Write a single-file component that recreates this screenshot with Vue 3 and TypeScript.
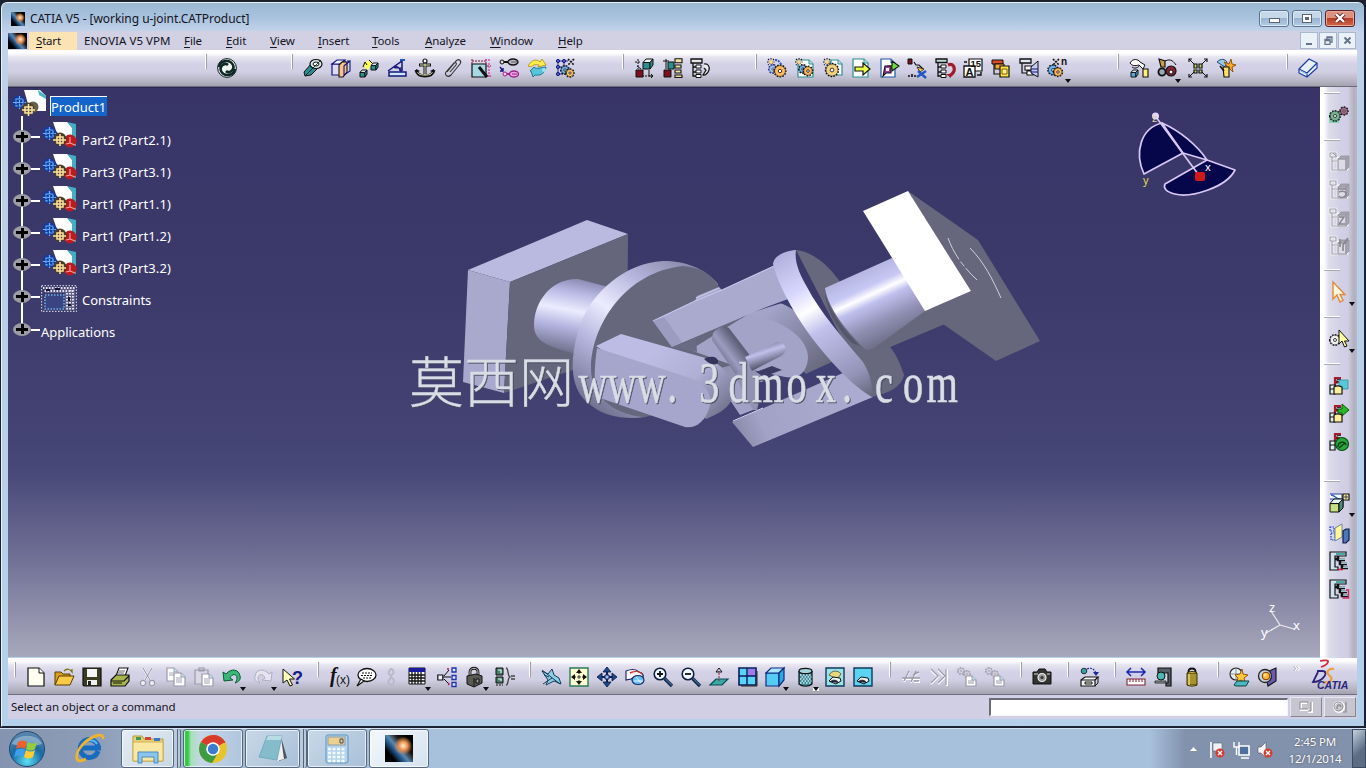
<script setup lang="ts">
// [path, fill, stroke, stroke width, dash]
type Shape = [string, string, string?, number?, string?]
interface Label { t: string, x: number, y: number, s: number, c: string, i?: boolean, b?: boolean }
interface Tool { icon: string, size?: number, more?: boolean }
interface Group { size: number, tools: Tool[] }

const K = '#111'
const NAVY = '#14147c'
const TEAL = '#2a8f90'
const GREY = '#9b9aab'

const circ = (x: number, y: number, r: number) => `M${x - r} ${y}a${r} ${r} 0 1 0 ${2 * r} 0a${r} ${r} 0 1 0 ${-2 * r} 0z`
const oval = (x: number, y: number, a: number, b: number) => `M${x - a} ${y}a${a} ${b} 0 1 0 ${2 * a} 0a${a} ${b} 0 1 0 ${-2 * a} 0z`
const box = (x: number, y: number, w: number, h: number) => `M${x} ${y}h${w}v${h}h${-w}z`
const gear = (x: number, y: number, r: number, fill: string, line = K): Shape[] => [
  [circ(x, y, r), fill, line, 2, '1.5 1.2'],
  [circ(x, y, r - 0.2), fill, line, 0.5],
  [circ(x, y, r * 0.3), '#fff', line, 0.8],
]
const cube = (x: number, y: number, s: number, fill: string, line = K): Shape[] => [
  [`M${x} ${y + s * 0.35}h${s * 0.7}v${s * 0.65}h${-s * 0.7}z`, fill, line, 1],
  [`M${x} ${y + s * 0.35}L${x + s * 0.3} ${y}h${s * 0.7}L${x + s * 0.7} ${y + s * 0.35}z`, '#e4f6f4', line, 1],
  [`M${x + s} ${y}v${s * 0.6}L${x + s * 0.7} ${y + s}v${-s * 0.65}z`, fill, line, 1],
]
const page = (x: number, y: number, w: number, h: number, line = TEAL): Shape[] => [
  [`M${x} ${y}h${w - 4}l4 4v${h - 4}h${-w}z`, '#fff', line, 1.2],
  [`M${x + w - 4} ${y}v4h4`, '#bfeaf0', line, 1],
]
const sparkle = (x: number, y: number): Shape[] => [
  [`M${x} ${y - 4}v8M${x - 4} ${y}h8M${x - 3} ${y - 3}l6 6M${x + 3} ${y - 3}l-6 6`, 'none', K, 1.1, '1.5 1'],
  [circ(x, y, 2), '#ffd98b'],
]
// disabled vault icons of the side toolbar
const ghost: Shape[] = [
  ['M1 1h6v4h-6zM3 5v13h5M3 9h5M9 6h9v11h-9z', 'none', '#fff', 2.6],
  ['M1 1h6v4h-6zM3 5v13h5M3 9h5', 'none', '#96959f', 1.1],
  [box(9, 7, 8, 11), '#dddce6', '#96959f', 1.2],
  ['M9 7l3-3h8l-3 3zM20 4v11l-3 3V7z', '#a5a4b0', '#96959f', 0.8],
]
const lugs: Shape[] = [
  ['M6 10V2h6M6 6h5', 'none', '#a71c2c', 2.2],
  ['M8 8V3.500h4', 'none', K, 0.8],
  ['M1 9h5v9h-5zM1 13h5', '#dff0ee', K, 1.2],
]
const specTree: Shape[] = [
  ['M1 1h16v4h-11v11h3v3h-8z', '#cfe0ee', K, 1.2],
  [box(7, 2, 9, 2), '#4aa8a8'],
  ['M9 5v4h7M11 9v4h7M13 13v4h6M6 8h3', 'none', K, 2.6],
  ['M10 8.500h6M12 12.500h6M14 16.500h5', 'none', '#8cc4cc', 1.1],
]

const icons: Record<string, Shape[]> = {
  update: [
    [circ(10, 10, 9.4), '#eef4ee', '#0a1c1c', 1],
    ['M2 9C3 2 13 1 16 7c2 5-4 9-7 6', 'none', '#0f2727', 2.6],
    ['M18 11C17 18 7 19 4 13c-2-5 4-9 7-6', 'none', '#0f2727', 2.6],
  ],
  coincidence: [
    ['M2 18L1 14L9 5l7 4l-8 8z', TEAL, K, 1],
    [oval(13, 6, 6, 4.5), '#d8eeee', K, 1.2],
    [oval(13, 6, 3, 2), '#fff', K, 1],
    ['M2 18L18 2', 'none', K, 0.8],
  ],
  contact: [
    [box(1, 6, 8, 11), '#dcdcf8', NAVY, 1.2],
    ['M1 6l5-4h8l-5 4zM9 17l5-4v-11', '#f2f2ff', NAVY, 1.1],
    ['M8 7l3-3h5v10l-4 5h-4z', '#f7c38b', K, 1.1],
    ['M13 8v9l6-4V3l-5 4zM16 3h3', 'none', NAVY, 1.1],
  ],
  offset: [...cube(1, 12, 7, TEAL), ...cube(12, 5, 7, TEAL), ['M5 9C6 2 10 2 13 5L9 12z', '#ffff55'], ['M4 9l2-5l2 3M13 5l-3-3', 'none', K, 1]],
  angle: [['M1 13L15 3v10', 'none', NAVY, 1.5], ['M2 14h17v4h-17z', '#cfe6ff', NAVY, 1.5], ['M7 10c3-3 6 0 6 3M8 10h6v4', 'none', NAVY, 1.2], ['M13 2h5', 'none', '#2255bb', 2]],
  anchor: [
    ['M10 5v13M4 7h12M1 12c1 5 5 6 9 6s8-1 9-6', 'none', K, 3],
    ['M10 5v12M5 7h10M2 13c1 4 5 4 8 4s7 0 8-4', 'none', '#e8ecb8', 1],
    [circ(10, 3, 2), '#fff', K, 1.2],
    ['M1 15V11l4 2zM19 15V11l-4 2z', K],
  ],
  clip: [['M4 14L13 3c3-3 6 0 4 3L8 17c-3 3-7 0-5-3L11 5c2-1 3 0 2 2L7 14', 'none', '#333', 1.1]],
  quick: [
    [box(1, 6, 14, 13), '#a8d8e4', K, 1.2],
    ['M1 1v5M15 1v5M1 3h14M16 8h4M16 18h4', 'none', '#7a1634', 1, '2 1'],
    ['M18 5v14M14 2h6', 'none', '#e04ab0', 1.4, '2 1'],
    ['M8 9l8 10', 'none', K, 3],
  ],
  flexible: [
    ['M1 4h8', 'none', K, 2], [oval(14, 4, 5, 3), '#bdbdc8', K, 1.3], [circ(3, 4, 2), '#ddd', K, 1], ['M12 4h6', 'none', '#555', 1],
    ['M7 16h6', 'none', '#a0208a', 2], [oval(15, 16, 4.5, 3), '#e8a4dc', '#a0208a', 1.3], [circ(6, 16, 2), '#f2c8ec', '#a0208a', 1], ['M13 16h5', 'none', '#a0208a', 1],
    ['M1 9l3 4M4 10v3h-3', 'none', NAVY, 1.4],
  ],
  change: [
    ['M1 8C5 1 10 1 13 4l2-3l4 6l-8 2l1-2C8 6 6 7 4 9z', '#ffec4a', '#b08a10', 0.8],
    ['M3 13l4-4c2 3 8 0 12 0c-1 6-5 9-11 8l-2 2l-2-6z', '#58c4dc', '#16708a', 0.9],
    [circ(17, 12, 2), '#9ee2ee'],
  ],
  pattern: [
    ['M3 3h10M3 9h8M3 16h5M3 3v13M9 3v13', 'none', NAVY, 0.9],
    [circ(3, 3, 1.6) + circ(9, 3, 1.6) + circ(3, 9, 1.6) + circ(3, 16, 1.6), '#4a66d8', NAVY, 1],
    ['M13 1l6 6M19 1l-6 6', 'none', K, 1.6, '2 1'],
    ...gear(10, 12, 4, '#6cb4f0'), ...gear(15, 15, 3.8, '#ffc86a'),
  ],
  posMove: [['M1 4h6M4 1v10M8 18h10', 'none', K, 1, '2 1'], ...cube(9, 1, 10, TEAL), [box(2, 12, 7, 7), '#7a1020', K, 1], ['M15 12v6h4M17 16l2 2l-2 2M3 8l4 3', 'none', K, 1]],
  posTree: [['M1 3h6M4 1v10', 'none', K, 1], [box(6, 4, 6, 7), TEAL, K, 1], [box(2, 12, 7, 7), '#7a1020', K, 1], [box(13, 0.8, 7, 4) + box(13, 7, 6, 3) + box(13, 12, 6, 3) + box(13, 17, 7, 2.5), '#f3e2a4', K, 1.1]],
  treeSort: [[box(1, 1, 11, 4), '#e6e6ea', K, 1.3], ['M3 5v13h6M3 9h6M3 14h6', 'none', K, 1.3], [box(6, 7, 5, 3) + box(6, 12, 5, 3) + box(6, 16.5, 5, 3), '#fff', K, 1], ['M14 6c4-1 6 3 5 6s-4 6-6 5l3-5l-2-2', '#e8e8ee', K, 1.2]],
  comp: [...sparkle(4, 4), ['M8 2c5 0 5 4 7 5', 'none', '#3454c0', 2, '2 1'], ...gear(6, 11, 4, '#a8c8f0', '#2c3a90'), ...gear(13, 13, 5.6, '#ffb85c')],
  product: [...page(3, 2, 15, 17), ...sparkle(4, 4), ...gear(8, 11, 4, '#6cb4f0'), ...gear(13, 13, 4.4, '#ffb85c')],
  part: [...page(8, 2, 11, 15), ...sparkle(4, 4), ...gear(9, 12, 6.2, '#f0d080')],
  existing: [...page(2, 1, 15, 18), ['M4 9h8v-4l7 6l-7 6v-4h-8z', '#eaff4a', K, 1.2]],
  existingPos: [...page(2, 1, 14, 18, '#1a5aa0'), ['M8 8h5V3l7 5l-7 5v-3h-3v4', '#6adc3a', K, 1.1], ['M4 18l2-10h6v7h-5z', '#a03aa0', K, 1.1], [box(7, 10, 3, 3), '#fff']],
  replace: [[box(1, 1, 4, 5), '#7a1020', K, 1], ['M7 4l2 3h3l4 4', 'none', K, 1.2], ['M10 9l7 2l-4 3z', '#ffc83a', K, 0.8], ['M10 19l9-6M11 13l8 7', 'none', '#2456c4', 2.4], ['M1 18h2M5 16v3M7 18h2', 'none', K, 1.6]],
  reorder: [[box(1, 1, 11, 3.5), '#bfdcd8', K, 1.3], ['M3 5v13h6M3 9h6M3 14h6', 'none', K, 1.3], [box(6, 7, 5, 3) + box(6, 12, 5, 3) + box(6, 16.5, 5, 3), '#fff', K, 1], ['M13 7c5-2 7 2 6 6c-1 3-3 4-5 5', 'none', '#a31a2a', 3.2], ['M11 16l5 0l0 4z', '#a31a2a']],
  numbering: [[box(6, 1, 13, 12), '#fff', K, 1.2], [box(1, 8, 11, 11), '#fff', K, 1.3], ['M14 17h4v-3M1 4h3', 'none', K, 1.4]],
  selective: [['M1 2h11v4h-11z', '#d84a28', K, 1], ['M4 6h9v5h-9z', '#f6a83a', K, 1], ['M9 8h9v11h-9z', '#ffe640', K, 1.2], ['M11 11h5v5h-5z', '#fff68a', '#805a00', 1], ['M3 6v10h6', 'none', K, 1.2]],
  reps: [[box(1, 1, 11, 4), '#dfe8f4', K, 1.3], ['M3 5v10h6', 'none', K, 1.2], [box(6, 8, 7, 4) + box(8, 13, 6, 4), '#fff', K, 1.1], ['M19 3v16l-7-4V9z', '#c4c8f4', K, 1], ['M12 11h7M12 14h7', 'none', NAVY, 1]],
  multi: [['M6 1l6 6M12 1l-6 6', 'none', K, 1.6, '2 1'], ...gear(6, 12, 4.8, '#6cb4f0'), ...gear(11, 14, 4.2, '#ffb85c')],
  manip: [['M1 5c3-5 8-4 10-1l5 3l-2 4l-4-4c-4 1-7 1-9-2z', '#fff', K, 1], ['M3 9c2 2 6 1 7-1', 'none', K, 1], ...cube(2, 12, 7, '#58a8e0'), [box(14, 11, 5, 8), '#ffef7a', K, 1.1]],
  snap: [['M2 1l6 2v6h-4z', '#c8a04a', K, 1.2], ['M8 3c6-3 9 1 11 4', 'none', K, 1], [circ(5, 14, 3.6), '#9aa8b4', K, 1.8], [circ(14, 13, 5), '#8a2438', K, 1.2], [circ(14, 14, 2), '#fff', K, 1]],
  explode: [['M1 1l5 5M19 1l-5 5M1 19l5-5M19 19l-5-5', 'none', K, 1], ['M1 4V1h3M16 1h3v3M1 16v3h3M19 16v3h-3', 'none', K, 1.2], [box(6, 6, 3, 4) + box(11, 6, 3, 4) + box(6, 12, 3, 3) + box(11, 12, 3, 3), '#c4d46a', K, 1.2]],
  clash: [['M1 4c4-4 8-3 10 0l-2 5z', '#9acbe6', '#224a80', 1], ['M15 1l1 5l4 1l-4 2l1 5l-4-4l-4 2l2-4l-3-4l5 2z', '#ffa82e', '#8a4a00', 0.9], ['M7 9h6v10h-5z', '#ffe066', K, 1.1], ['M4 8l4 5', 'none', K, 1.5]],
  book: [['M1 11L11 1l8 4v5L9 19l-8-4z', '#e6f0ff', '#1a3aa0', 1.2], ['M1 11l8 4L19 5M9 15v4', 'none', '#1a3aa0', 1.2], ['M3 13l6 3l9-9', 'none', '#8aa8e0', 1]],

  gears: [['M0 8h12l-2 10h-10z', '#8fd0b8'], ...gear(6, 11, 5, '#7ab090', '#0e1c1c'), ...gear(15, 6, 3.8, '#a4708c', '#201020')],
  pdm1: [...ghost, ['M4 1l4 4', 'none', GREY, 1]],
  pdm2: [...ghost, ['M9 9h8M10 12c4-2 8 0 7 3c-2 3-6 3-7 1', 'none', '#85848f', 1.5]],
  pdm3: [...ghost, ['M10 9h5l-5 7h6', 'none', '#85848f', 1.4]],
  pdm4: [...ghost, ['M11 3v8M19 2l-5 7v6', 'none', '#85848f', 1.6]],
  cursor: [['M4 0v17l4-4l3 7l3-1.500l-3-6h5z', '#fff6dc', '#e08a3c', 1.4]],
  cursorGear: [...gear(6, 11, 5, '#f0f0f0'), ['M10 1v14l3-3l2.500 6l2.500-1l-2.500-5h4.500z', '#ffffa0', K, 1]],
  save1: [...lugs, [box(10, 4, 9, 9), '#5ac8dc', TEAL, 0.8], ['M5 11c3-2 6-1 8 0v7h-8z', '#ffef9a', K, 1.2]],
  save2: [...lugs, ['M9 5h4V0l7 6l-7 6v-3h-4z', '#28b828', '#0a5a0a', 1], ['M5 11c3-2 6-1 8 0v7h-8z', '#ffef9a', K, 1.2]],
  save3: [...lugs, [circ(13, 12, 6.5), '#28a83c', '#0a4a14', 1.2], ['M9 15c0-6 7-6 8-2M10 16l6-5', 'none', '#0a3a14', 1.3]],
  annot: [['M1 1h12v5h-12', '#fff', '#1a3aa0', 1], ['M2 2c4 0 4 4 9 4', 'none', '#2a5ad0', 1.4], ...cube(1, 6, 13, '#c8e080'), ['M14 6v9l-4 4V10z', '#4a8a7a', K, 1], [box(14, 1, 6, 6), '#fff6b0', K, 1.2], [box(16, 3, 2, 2), '#fff', K, 0.8]],
  views: [['M1 4h4v4h-4zM2 10h4v7h-4z', 'none', '#1a3ad0', 1.2, '1.5 1'], ['M6 5l7-4v13l-7 4z', '#fff59a', '#6a8a9a', 1], ['M14 8l3-2h3v11l-3 3h-3z', '#4a78b8', '#101c50', 1.2]],
  spec1: [...specTree, ['M9 18.500h5', 'none', '#d0203c', 1.6]],
  spec2: [...specTree, ['M17 11h2.500v8h-6', 'none', '#d82860', 1.5]],

  new: [['M2 1h11l5 5v13h-16z', '#fffff2', K, 1.2], ['M13 1v5h5', '#fff', K, 1]],
  open: [['M1 18V5h6l2 2h7v3', '#d8a018', '#5a3c00', 1], ['M1 18l4-9h15l-4 9z', '#f8ca48', '#5a3c00', 1], ['M10 4c3-3 6-2 8 1v-3', 'none', '#7a6a10', 1.2]],
  save: [['M1 1h18v18h-17l-1-1z', '#3c3c22', K, 1.2], [box(5, 2, 10, 8), '#f6f6f6'], [box(5, 13, 10, 5), '#f0f0f0'], [box(6, 14, 3, 4), '#222']],
  print: [['M6 9l3-8h9l-3 8z', '#fff', K, 1.1], ['M1 13l5-5h13v6l-4 5h-14z', '#a8b44c', K, 1.2], ['M1 14h13l5-5M3 16h9', 'none', K, 1.1], ['M9 4h6M8 6h6', 'none', '#555', 0.9]],
  cut: [['M5 1l7 12M14 1L7 13', 'none', '#fff', 2], ['M5 1l7 12M14 1L7 13', 'none', GREY, 1.1], [circ(5, 16, 2.6) + circ(14, 16, 2.6), '#eee', GREY, 1.2]],
  copy: [...page(1, 1, 11, 13, GREY), ...page(8, 6, 11, 13, GREY), ['M10 11h6M10 13h6M10 15h6M3 6h5M3 8h5', 'none', GREY, 0.9]],
  paste: [['M1 3h13v14h-13zM5 1h5v3h-5z', '#d9d8e4', GREY, 1.2], ...page(8, 7, 11, 12, GREY), ['M10 12h6M10 14h6M10 16h6', 'none', GREY, 0.9]],
  undo: [['M1 5l1 9l9-1l-3-2c2-5 7-4 7 0c0 2-1 4-2 5c4-1 6-4 5-7c-1-7-9-8-14-2z', '#38b878', '#0a5a34', 1]],
  redo: [['M19 5l-1 9l-9-1l3-2c-2-5-7-4-7 0c0 2 1 4 2 5c-4-1-6-4-5-7c1-7 9-8 14-2z', '#e6e5ef', '#b0afbf', 1]],
  help: [['M1 2v14l4-3l3 6l2.500-1l-3-6h5z', '#ffffb8', K, 1]],
  fx: [],
  comment: [[oval(11, 8, 9, 6.500), '#fff', K, 1.3], ['M5 12l-4 7l7-5z', '#fff', K, 1.2], ['M6 6h10M5 8.500h12M7 11h8', 'none', K, 1, '2 1']],
  link: [['M8 2c4-1 5 6 1 6c-3 0-3-5 0-5M9 7v4M8 11c5-1 5 7 1 7c-4 0-3-6 0-6', 'none', '#b9b8c6', 1.8]],
  table: [[box(2, 1, 16, 16), '#fff', K, 1], [box(2, 1, 16, 4), '#1a1aa0'], ['M2 8h16M2 11h16M2 14h16M5 5v12M8 5v12M11 5v12M14 5v12', 'none', K, 1.3]],
  relations: [[box(0.800, 8, 5, 5), '#eef', K, 1.2], ['M6 10h8M7 9l5-6M7 12l5 5', 'none', K, 1], ['M12 2h-3M12 18l-1-3', 'none', '#b01838', 1.6, '2 1'], [box(15, 1, 4, 4) + box(15, 8.500, 4, 4) + box(15, 15.500, 4, 4), '#dfe6ff', '#2030b0', 1.3]],
  lock: [['M5 9V5c0-5 8-5 8 0v3', 'none', K, 2.8], ['M5 9V5c0-5 8-5 8 0v3', 'none', '#ccc', 1], ['M2 9l9-2l6 2v7l-8 4l-7-3z', '#5a5a54', K, 1], ['M9 11v8M11 12h3v4h-3z', '#9a9a90', K, 1]],
  equiv: [[box(1, 1, 7, 7) + box(1, 10, 7, 6), '#4a7a6a', K, 1], ['M3 3h3v3M3 12h3v2', 'none', '#cfe', 1.2], ['M1 18h7', 'none', K, 1, '2 1'], ['M11 1c3 0 1 8 4 9c-3 1-1 8-4 8', 'none', '#444', 1.3], ['M16 9h4M16 12h4', 'none', '#444', 1.3]],
  fly: [['M1 4l6 3l4-5l2 6l5 3l2 6l-7-3l-8 4l2-5z', '#8ad0e4', '#1a3a5a', 1], ['M1 3l18 14M2 17l9-6M3 8l5 2', 'none', '#1a3a5a', 1]],
  fit: [[box(1, 1, 18, 18), '#fffbd0', '#2a7a5a', 1.4], ['M10 3v14M3 10h14', 'none', K, 1, '4 6'], ['M10 2l-3 4h6zM10 18l-3-4h6zM2 10l4-3v6zM18 10l-4-3v6z', K], ['M9 9h2v2h-2z', '#fff', K, 0.8]],
  pan: [['M10 2v16M2 10h16', 'none', '#10205c', 2], ['M10 0l-4 5h8zM10 20l-4-5h8zM0 10l5-4v8zM20 10l-5-4v8z', '#1a4a8a', '#08143c', 0.8], [box(8, 8, 4, 4), '#9cc4e8', '#10205c', 1]],
  rotate: [['M1 4v9l5-1c3-3 8-1 11 0c3-3 0-7-3-7c-3-3-8-3-13-1z', '#fff', '#1a1a5a', 1.1], ['M5 6c4-2 9-2 12 1', 'none', '#d0342c', 1.4], [oval(13, 13, 6, 4.500), '#6ac0f0', '#1a2a6a', 1.2], ['M11 10l5 6M9 14h9', 'none', '#e8f8ff', 1]],
  zoomIn: [[circ(7, 7, 5.800), '#eef8ff', '#10203c', 1.6], ['M4 7h6M7 4v6', 'none', K, 1.8], ['M11.500 11.500l7.500 7.500', 'none', '#10284c', 3.4], ['M12 11.500l7 7', 'none', '#7ac', 0.8]],
  zoomOut: [[circ(7, 7, 5.800), '#eef8ff', '#10203c', 1.6], ['M4 7h6', 'none', K, 1.8], ['M11.500 11.500l7.500 7.500', 'none', '#10284c', 3.4], ['M12 11.500l7 7', 'none', '#7ac', 0.8]],
  normal: [['M1 18l6-6h12l-6 6z', '#3aa8a0', '#0a4a5a', 1.2], ['M10 14V4', 'none', '#a02848', 1.1, '2 1'], ['M10 1l-3 4h6z', 'none', K, 1]],
  quad: [[box(2, 1, 17, 17), '#5ad4f4', '#0a1a5c', 1.6], [box(11, 2, 7, 7), '#a07ae8'], ['M10 1v17M2 9h17', 'none', '#0a1a5c', 1.4], ['M4 19h16V4', 'none', '#222', 1]],
  iso: [['M1 6h13v13h-13z', '#54ccf4', '#102a80', 1.2], ['M1 6l5-5h13l-5 5z', '#a8e8ff', '#102a80', 1.2], ['M19 1v12l-5 6V6z', '#2ea8e0', '#102a80', 1.2]],
  shaded: [['M4 4v13c3 3 10 3 13 0V4', '#3c8898', K, 1.2], ['M5 8h11M5 12h11M5 16h11', 'none', '#cfeef0', 1.4, '1.5 1.5'], ['M6.500 10h10M6.500 14h10', 'none', '#cfeef0', 1.4, '1.5 1.5'], [oval(10.5, 4, 6.5, 2.600), '#a4d4dc', K, 1.2]],
  hide: [[box(1, 1, 18, 18), '#9ae4e8', '#10385c', 1.4], ['M4 8c3-5 9-5 12-1l-4 5z', '#e8d87a', '#555', 0.9], ['M4 14l4-4l7 1l1 3l-5 3z', '#e8f4f0', K, 1], ['M5 15c3-3 7-2 9 1', '#224', K, 0.8]],
  swap: [[box(1, 1, 18, 18), '#5ad4f0', '#10385c', 1.4], ['M4 14l4-4l7 1l1 3l-5 3z', '#e8f4f0', K, 1], ['M5 15c3-3 7-2 9 1', '#224', K, 0.8]],
  mute1: [['M1 12h18M3 15l5-10M10 16l5-11M12 9l6-3M13 15h6', 'none', '#fff', 1.8], ['M1 11h18M3 14l5-10M10 15l5-11M12 8l6-3M13 14h5', 'none', GREY, 1.4]],
  mute2: [['M2 3l7 7l-7 7M9 3l7 7l-7 7M18 2v17', 'none', '#fff', 2], ['M2 2l7 7l-7 7M9 2l7 7l-7 7M17 2v16', 'none', GREY, 1.2]],
  mute3: [...gear(4, 4, 3, '#d8d7e3', GREY), ...gear(10, 7, 3, '#d8d7e3', GREY), ...page(9, 9, 10, 10, GREY), ['M11 14h6M11 16h6', 'none', GREY, 1]],
  camera: [['M1 5h4l2-3h6l2 3h4v12h-18z', '#333', K, 1], [circ(10, 10.500, 4), '#9a9a9a', '#eee', 1.2], [circ(10, 10.500, 1.600), '#333'], ['M2 7h4M15 7h3', 'none', '#ddd', 1.2]],
  drop: [[circ(5, 4, 2.800), '#38a0a8', K, 0.8], ['M8 2c4-2 8 0 9 5', 'none', '#1a2a90', 1.2, '2 1'], ['M14 5h6l-3 4z', '#1a2a90'], ['M2 13l4-3h13l-3 3v6h-14z', '#f4f4f4', K, 1.2], ['M2 13h14l3-3v6l-3 3M6 15h7v2h-7z', 'none', K, 1]],
  measure: [['M1 5h18M5 1l-4 4l4 4M15 1l4 4l-4 4', 'none', '#1a2ab0', 1.6], [box(1, 12, 18, 6), '#fff', '#7a2438', 1.1], ['M4 12v3M7 12v3M10 12v3M13 12v3M16 12v3', 'none', '#7a2438', 1]],
  caliper: [['M4 1h13v18h-5v-3h2V6h-10z', '#556068', K, 1.2], [circ(7, 9, 4), '#4ab8b0', K, 1], ['M1 14h11v2h-11z', '#9aa', K, 0.8]],
  weight: [['M7 6c-3-6 9-6 6 0', 'none', K, 2], [box(5, 6, 10, 12), '#a8922c', '#3a3000', 1], ['M5 6c3-2 7-2 10 0M5 18c3 1.500 7 1.500 10 0', '#c8b44c', '#3a3000', 1], ['M7 7v11', 'none', '#e0d078', 1.6]],
  render: [[circ(7, 7, 6), '#e4f0f4', '#222', 1.1], ['M1 7h12M7 1v12', 'none', '#667', 0.7], ['M13 2l1 5l5 1l-4 3l1 5l-4-3l-4 2l1-4l-3-3l5-1z', '#ffc838', '#8a4a00', 0.9], ['M5 18l3-4h12l-3 5h-10z', '#4ab8c0', '#104040', 1]],
  material: [['M8 6L19 1v13l-8 5z', '#6a5ab0', K, 1.1], [circ(8, 9, 6.500), '#c8d4dc', '#222', 1.3], [circ(9, 9, 3.800), '#ffb83a', '#7a3a00', 1], [circ(8, 8, 1.500), '#ffe89a']],
}

const labels: Record<string, Label[]> = {
  numbering: [{ t: 'A', x: 2.5, y: 18, s: 11, c: K, b: true }, { t: '15', x: 7.5, y: 8.5, s: 9.5, c: K, b: true }],
  multi: [{ t: 'n', x: 14, y: 7, s: 10, c: K, b: true }],
  help: [{ t: '?', x: 10, y: 17, s: 18, c: '#14207c', b: true }],
  fx: [{ t: 'f', x: 1, y: 15, s: 20, c: K, i: true }, { t: '(x)', x: 7, y: 17, s: 12, c: K }],
}

const t = (names: string): Tool[] => names.split(' ').map((n) => {
  const [icon, size] = n.replace('+', '').split(':')
  return { icon, size: size ? Number(size) : undefined, more: n.includes('+') }
})

const topGroups: Group[] = [
  { size: 86, tools: t('update') },
  { size: 331, tools: t('coincidence contact offset angle anchor clip quick flexible change pattern') },
  { size: 133, tools: t('posMove posTree treeSort') },
  { size: 362, tools: t('comp product part existing existingPos replace reorder numbering selective reps multi+') },
  { size: 169, tools: t('manip snap+:31 explode clash') },
  { size: 60, tools: t('book') },
]
const bottomGroups: Group[] = [
  { size: 303, tools: t('new open save print cut copy paste undo+:31 redo+:29 help') },
  { size: 212, tools: t('fx:27 comment:26 link:25 table+:30 relations lock+:30 equiv') },
  { size: 360, tools: t('fly fit pan rotate zoomIn zoomOut normal quad iso+:30 shaded+:30 hide swap') },
  { size: 131, tools: t('mute1 mute2 mute3 mute3') },
  { size: 47, tools: t('camera') },
  { size: 47, tools: t('drop') },
  { size: 103, tools: t('measure caliper weight') },
  { size: 74, tools: t('render material') },
]
const sideGroups: Group[] = [
  { size: 47, tools: t('gears') },
  { size: 130, tools: t('pdm1 pdm2 pdm3 pdm4') },
  { size: 47, tools: t('cursor+') },
  { size: 47, tools: t('cursorGear+') },
  { size: 117, tools: t('save1 save2 save3') },
  { size: 140, tools: t('annot+:30 views spec1 spec2') },
]

const menus = ['File', 'Edit', 'View', 'Insert', 'Tools', 'Analyze', 'Window', 'Help']
const menuWidths = [42, 44, 48, 54, 53, 65, 68, 50]
const parts = ['Part2 (Part2.1)', 'Part3 (Part3.1)', 'Part1 (Part1.1)', 'Part1 (Part1.2)', 'Part3 (Part3.2)']

// full stops sit at the left of their cell
const watermark = 'www.3dmox.com'
const glyphX = [...watermark].map((c, i) => ((593 + i * 29.1 - (c === '.' ? 8 : 0)) / 0.72).toFixed(1)).join(' ')
</script>

<template>
  <div class="screen">
    <div class="window">
      <header class="titlebar">
        <span class="app-logo small"></span>
        <span class="title">CATIA V5 - [working u-joint.CATProduct]</span>
        <div class="win-buttons">
          <span class="win-btn"><i class="min"></i></span>
          <span class="win-btn"><i class="max"></i></span>
          <span class="win-btn close">
            <svg width="12" height="10" viewBox="0 0 12 10"><path d="M2 1l8 8M10 1l-8 8" stroke="#5a2020" stroke-width="4" /><path d="M2 1l8 8M10 1l-8 8" stroke="#fff" stroke-width="2.4" /></svg>
          </span>
        </div>
      </header>

      <nav class="menubar">
        <span class="app-logo"></span>
        <span class="start"><u>S</u>tart</span>
        <span class="enovia">ENOVIA V5 VPM</span>
        <span v-for="(m, i) in menus" :key="m" class="menu" :style="{ width: menuWidths[i] + 'px' }"><u>{{ m[0] }}</u>{{ m.slice(1) }}</span>
        <div class="doc-buttons">
          <span><i class="doc-min"></i></span>
          <span><svg width="9" height="9" viewBox="0 0 9 9"><path d="M3 3V1h5v5H6M1 3.500h5v5H1zM1 4.500h5M3 1.500h5" fill="none" stroke="#667487" stroke-width="1.300" /></svg></span>
          <span><svg width="9" height="9" viewBox="0 0 9 9"><path d="M1.500 1.500l6 6M7.500 1.500l-6 6" stroke="#667487" stroke-width="2" /></svg></span>
        </div>
      </nav>

      <div class="toolbar top">
        <div v-for="(g, gi) in topGroups" :key="gi" class="group" :style="{ width: g.size + 'px' }">
          <span v-for="(tool, ti) in g.tools" :key="ti" class="tool" :style="{ width: (tool.size ?? 28) + 'px' }">
            <svg viewBox="0 0 20 20" width="20" height="20">
              <path v-for="(s, si) in icons[tool.icon]" :key="si" :d="s[0]" :fill="s[1]" :stroke="s[2]" :stroke-width="s[3]" :stroke-dasharray="s[4]" />
              <text v-for="l in labels[tool.icon]" :key="l.t" :x="l.x" :y="l.y" :font-size="l.s" :fill="l.c" :class="{ slant: l.i, heavy: l.b }">{{ l.t }}</text>
            </svg>
            <i v-if="tool.more" class="more"></i>
          </span>
        </div>
      </div>

      <div class="middle">
        <main class="viewport">
          <svg class="scene" width="1312" height="570" viewBox="8 87 1312 570">
            <defs>
              <linearGradient id="shaftL" x1="0.550" y1="0" x2="0.350" y2="1">
                <stop offset="0" stop-color="#8c8cb4" /><stop offset="0.180" stop-color="#b8b8e4" /><stop offset="0.420" stop-color="#ececff" />
                <stop offset="0.650" stop-color="#b4b4e0" /><stop offset="1" stop-color="#6c6c88" />
              </linearGradient>
              <linearGradient id="rimL" gradientUnits="userSpaceOnUse" x1="700" y1="265" x2="600" y2="415">
                <stop offset="0" stop-color="#8484a4" /><stop offset="0.250" stop-color="#b4b4dc" /><stop offset="0.480" stop-color="#ececff" />
                <stop offset="0.700" stop-color="#b2b2dc" /><stop offset="1" stop-color="#6e6e8c" />
              </linearGradient>
              <linearGradient id="rimR" gradientUnits="userSpaceOnUse" x1="785" y1="252" x2="868" y2="395">
                <stop offset="0" stop-color="#b0b0dc" /><stop offset="0.250" stop-color="#d8d8ff" /><stop offset="0.380" stop-color="#fff" />
                <stop offset="0.520" stop-color="#c0c0ec" /><stop offset="0.850" stop-color="#9494b8" /><stop offset="1" stop-color="#6a6a82" />
              </linearGradient>
              <linearGradient id="shaftR" gradientUnits="userSpaceOnUse" x1="850" y1="272" x2="885" y2="348">
                <stop offset="0" stop-color="#b0b0dc" /><stop offset="0.250" stop-color="#c8c8f4" /><stop offset="0.350" stop-color="#fff" />
                <stop offset="0.450" stop-color="#c0c0ee" /><stop offset="0.700" stop-color="#9090b4" /><stop offset="1" stop-color="#67677f" />
              </linearGradient>
              <linearGradient id="lugEnd" gradientUnits="userSpaceOnUse" x1="660" y1="345" x2="728" y2="412">
                <stop offset="0" stop-color="#bcbce4" /><stop offset="0.500" stop-color="#b0b0d6" /><stop offset="1" stop-color="#70708c" />
              </linearGradient>
              <linearGradient id="pinA" gradientUnits="userSpaceOnUse" x1="715" y1="357" x2="736" y2="341">
                <stop offset="0" stop-color="#62627a" /><stop offset="0.500" stop-color="#9c9cc0" /><stop offset="1" stop-color="#60607a" />
              </linearGradient>
              <linearGradient id="pinB" gradientUnits="userSpaceOnUse" x1="764" y1="345" x2="770" y2="364">
                <stop offset="0" stop-color="#8888ac" /><stop offset="0.350" stop-color="#c0c0ea" /><stop offset="1" stop-color="#5a5a72" />
              </linearGradient>
              <linearGradient id="backLug" gradientUnits="userSpaceOnUse" x1="775" y1="305" x2="825" y2="370">
                <stop offset="0" stop-color="#a4a4ca" /><stop offset="0.450" stop-color="#8888a8" /><stop offset="1" stop-color="#656579" />
              </linearGradient>
              <linearGradient id="lower" gradientUnits="userSpaceOnUse" x1="740" y1="440" x2="860" y2="385">
                <stop offset="0" stop-color="#8a8aaa" /><stop offset="0.200" stop-color="#a2a2c6" /><stop offset="1" stop-color="#acacd2" />
              </linearGradient>
            </defs>

            <!-- left yoke: block, shaft, flange -->
            <path d="M468 270L587 220L628 234L510 282z" fill="#babae0" />
            <path d="M468 270L510 282L504 393L463 382z" fill="#a9a9cd" />
            <path d="M510 282L628 234L627 352L504 393z" fill="#65657c" />
            <path d="M578 279C553 278 534 300 534 325C534 340 545 346 572 353L595 345L612 288z" fill="url(#shaftL)" />
            <path d="M718 284C705 268 685 261 663 261C625 263 592 292 580 325C568 362 570 392 592 406C604 416 625 420 645 417L720 380z" fill="url(#rimL)" />
            <path d="M683 266C700 267 712 274 719 287L750 330L715 400L645 417C620 416 590 400 591 367C592 325 625 272 683 266z" fill="#66667c" />

            <!-- right yoke arms behind the cross -->
            <path d="M750 313L782 303L797 312L832 362L806 374L785 350z" fill="url(#backLug)" />
            <path d="M690 350L750 313C785 322 808 338 808 358C807 374 797 379 785 377L735 366z" fill="#a3a3c8" />
            <path d="M653 321L695 301L697 296L719 287L722 290L774 266L796 296L764 308L672 347z" fill="#aaaacf" />
            <path d="M696 298L719 288M653 321L695 301L722 290L774 266" fill="none" stroke="#c6c6ec" stroke-width="1.200" />
            <path d="M653 321L672 347L682 342L664 317z" fill="#9c9cc0" />
            <path d="M672 347L696 338L697 352z" fill="#6a6a84" />
            <path d="M780 303l14-5l6 13l-9-4z" fill="#3e3e74" />

            <!-- cross -->
            <path d="M712 370L745 362L764 378L757 410L740 410L722 388z" fill="#9292b2" />
            <path d="M720 335L729 328C722 324 711 330 712 340L736 375L752 358L729 328z" fill="url(#pinA)" />
            <path d="M745 357L777 342C786 341 789 352 781 356L752 371z" fill="url(#pinB)" />
            <path d="M756 372l16-6l10 4l-14 5z" fill="#3c3c62" />
            <path d="M755 383L785 378L800 379L806 374L833 362L843 375L760 407z" fill="#3f3f72" />
            <path d="M735 376L753 410L740 415L722 388z" fill="#a2a2c6" />

            <!-- left yoke front arm -->
            <path d="M596 346L621 334L702 357C722 362 735 378 733 396C730 408 718 414 706 419z" fill="url(#lugEnd)" />
            <path d="M704 359c6-4 15-3 14 4c-4 3-9 1-14-4z" fill="#33335c" />
            <path d="M597 348L690 378C705 383 712 394 710 405C706 422 695 429 685 427L597 397C593 380 595 362 597 348z" fill="#a6a6cc" />

            <!-- right yoke: flange, lower arm, shaft, block -->
            <path d="M732 422L843 373L873 397L753 447z" fill="url(#lower)" />
            <path d="M733 421l30-13" stroke="#d8d8f8" stroke-width="1" />
            <path d="M796 250C812 252 826 263 838 279L890 347C897 355 901 366 904 375C902 386 890 393 872 397z" fill="#67677d" />
            <path d="M773 264C774 256 784 251 796 250C794 262 800 275 807 287C820 312 842 337 863 362C870 373 873 386 872 397C855 388 830 362 812 338C795 315 778 285 773 264z" fill="url(#rimR)" />
            <path d="M825 288L892 258L945 324L890 347L866 350C850 335 828 310 825 288z" fill="url(#shaftR)" />
            <path d="M825 294C832 316 846 332 860 346L852 343C838 330 827 312 825 294z" fill="#55556c" />
            <path d="M908 191L978 240L1040 341L996 361L943 324L890 347L870 351L925 311L971 291z" fill="#66667c" />
            <path d="M863 211L908 191L971 291L925 311z" fill="#fff" />
            <path d="M948 238C953 252 962 266 977 280" fill="none" stroke="#dcdce8" stroke-width="0.900" stroke-dasharray="24 3 6 2" />
            <path d="M970 248C984 262 993 280 1001 298" fill="none" stroke="#dcdce8" stroke-width="0.900" />

            <!-- compass -->
            <g stroke="#d8c8f4" stroke-width="1.700" stroke-linejoin="round" fill="#06064a">
              <path d="M1162 123C1141 128 1134 152 1144 174L1183 153z" />
              <path d="M1162 123C1180 131 1197 145 1207 160L1183 153z" />
              <path d="M1207 160L1235 170C1226 188 1190 198 1175 194C1166 192 1163 188 1165 184z" />
              <path d="M1156 117L1198 174" />
            </g>
            <circle cx="1155.500" cy="116" r="3.500" fill="#e4d8fa" />
            <rect x="1195" y="172" width="10" height="9" rx="2" fill="#d21818" />
            <g class="axis-name">
              <text x="1152" y="122" fill="#d8d0a0">z</text>
              <text x="1143" y="184" fill="#e0dc50">y</text>
              <text x="1205" y="171" fill="#fff">x</text>
            </g>

            <!-- axis triad -->
            <path d="M1280 625L1271 611M1280 625L1266 633M1280 625L1294 629" stroke="#eee" stroke-width="1.200" />
            <g class="axis-name big" fill="#fff">
              <text x="1269" y="612">z</text>
              <text x="1293" y="630">x</text>
              <text x="1261" y="637">y</text>
            </g>

            <g class="watermark">
              <text class="cjk" x="409" y="402">莫西网</text>
              <text class="latin" transform="scale(0.720 1)" :x="glyphX" y="402">{{ watermark }}</text>
            </g>
          </svg>

          <div class="tree">
            <div class="root">
              <svg width="34" height="28" viewBox="0 0 34 28">
                <path d="M11 0h16l6 6v15h-16z" fill="#fff" /><path d="M25 0l8 6v3l-7-4z" fill="#48b4c4" />
                <circle cx="6" cy="12" r="6.500" fill="#123a9c" /><path d="M3 9h7v7H3zM6.500 6v13M0 12.500h13" fill="none" stroke="#6cb4ff" stroke-width="1.200" stroke-dasharray="3 0.800" />
                <circle cx="20" cy="17" r="5.500" fill="#66604c" /><circle cx="15" cy="19" r="6.500" fill="#4a4030" /><path d="M12 17h7v6h-7zM15.500 14v12M9 20h13" fill="none" stroke="#ffe4a0" stroke-width="1.500" />
              </svg>
              <span class="selected">Product1</span>
            </div>
            <div v-for="p in parts" :key="p" class="node">
              <i class="knob"></i>
              <svg width="34" height="28" viewBox="0 0 34 28">
                <path d="M24 1l9 2v22l-4-1V7z" fill="#40b0c0" /><path d="M10 1h14l5 6v14h-12z" fill="#fff" />
                <circle cx="6" cy="12" r="6.500" fill="#123a9c" /><circle cx="11" cy="14" r="4" fill="#123a9c" /><path d="M3 9h7v7H3zM6.500 6v13M0 12.500h13" fill="none" stroke="#6cb4ff" stroke-width="1.200" stroke-dasharray="3 0.800" />
                <circle cx="27" cy="20" r="6.500" fill="#b81c20" /><path d="M23 23l4-1v-6M27 22l5 2" fill="none" stroke="#ff9a90" stroke-width="1.200" />
                <circle cx="17" cy="18" r="6.500" fill="#4a3c28" /><path d="M14 16h6v6h-6zM17 13v12M10 19h13" fill="none" stroke="#ffe4a0" stroke-width="1.500" />
              </svg>
              <span>{{ p }}</span>
            </div>
            <div class="node">
              <i class="knob"></i>
              <svg class="constraints" width="36" height="27" viewBox="0 0 36 27">
                <path d="M0.500 0.500h35v26h-35z" fill="none" stroke="#c8c8dc" stroke-width="1.400" stroke-dasharray="1.500 1.500" />
                <path d="M4 2h20v6H4zM24 2h10v23H24z" fill="#5e5e86" />
                <path d="M2 3h32M3.500 6h30M26 8v17M29 5v20M32 5v20" stroke="#e4e4f0" stroke-width="2" stroke-dasharray="1.500 1.500" />
                <path d="M5 5h4M14 4h5M28 12v4M27 20h3" stroke="#14142c" stroke-width="2" />
                <path d="M4 10h19v14H4z" fill="#3a4482" stroke="#6ab4ec" stroke-width="1.500" stroke-dasharray="1.500 1.500" />
              </svg>
              <span class="tight">Constraints</span>
            </div>
            <div class="node last">
              <i class="knob"></i>
              <span class="tight">Applications</span>
            </div>
          </div>
        </main>

        <aside class="sidebar">
          <div v-for="(g, gi) in sideGroups" :key="gi" class="vgroup" :style="{ height: g.size + 'px' }">
            <span v-for="(tool, ti) in g.tools" :key="ti" class="vtool" :style="{ height: (tool.size ?? 28) + 'px' }">
              <svg viewBox="0 0 20 20" width="20" height="20">
                <path v-for="(s, si) in icons[tool.icon]" :key="si" :d="s[0]" :fill="s[1]" :stroke="s[2]" :stroke-width="s[3]" :stroke-dasharray="s[4]" />
              </svg>
              <i v-if="tool.more" class="more"></i>
            </span>
          </div>
        </aside>
      </div>

      <div class="toolbar bottom">
        <div v-for="(g, gi) in bottomGroups" :key="gi" class="group" :style="{ width: g.size + 'px' }">
          <span v-for="(tool, ti) in g.tools" :key="ti" class="tool" :style="{ width: (tool.size ?? 28) + 'px' }">
            <svg viewBox="0 0 20 20" width="20" height="20">
              <path v-for="(s, si) in icons[tool.icon]" :key="si" :d="s[0]" :fill="s[1]" :stroke="s[2]" :stroke-width="s[3]" :stroke-dasharray="s[4]" />
              <text v-for="l in labels[tool.icon]" :key="l.t" :x="l.x" :y="l.y" :font-size="l.s" :fill="l.c" :class="{ slant: l.i, heavy: l.b }">{{ l.t }}</text>
            </svg>
            <i v-if="tool.more" class="more" :class="{ lit: tool.icon === 'shaded' }"></i>
          </span>
        </div>
        <span class="overflow">»</span>
        <svg class="brand" width="44" height="34" viewBox="0 0 44 34">
          <path d="M11 2c4-1 9-1 8 1c-1 3-4 4-7 5" fill="none" stroke="#d02838" stroke-width="1.800" />
          <path d="M8 12h5c5 0 4 4 1 7c-3 3-6 4-10 4l5-10" fill="none" stroke="#2c2478" stroke-width="1.800" />
          <path d="M25 10c-4-1-8 2-6 5c2 3 5 3 3 6c-1 2-4 3-7 2" fill="none" stroke="#f09a38" stroke-width="2" />
          <text x="8" y="30">CATIA</text>
        </svg>
      </div>

      <footer class="status">
        <span class="message">Select an object or a command</span>
        <span class="power-input"></span>
        <span class="status-btn"><svg width="14" height="12" viewBox="0 0 14 12"><path d="M2 2h7v7H2zM13 1v10H9" fill="none" stroke="#fff" stroke-width="2" /><path d="M1 1h8v7H1zM12 1v9H9" fill="none" stroke="#88878f" stroke-width="1" /></svg></span>
        <span class="status-btn"><svg width="16" height="12" viewBox="0 0 16 12"><circle cx="7" cy="6" r="5" fill="none" stroke="#fff" stroke-width="2" /><circle cx="6.500" cy="5.500" r="4.500" fill="none" stroke="#88878f" /><path d="M5 8c0-5 3-5 4-2M14 1v10h-3" fill="none" stroke="#88878f" stroke-width="1.200" /></svg></span>
      </footer>
    </div>

    <div class="taskbar">
      <svg class="orb" width="38" height="38" viewBox="0 0 38 38">
        <defs>
          <radialGradient id="orb" cx="0.500" cy="0.850" r="0.900"><stop offset="0" stop-color="#5ae0f4" /><stop offset="0.500" stop-color="#1a6aa4" /><stop offset="1" stop-color="#6c8cb0" /></radialGradient>
        </defs>
        <circle cx="19" cy="19" r="17.500" fill="url(#orb)" stroke="#24486c" stroke-width="1" />
        <path d="M4 14C8 3 30 3 34 14C26 17 12 17 4 14z" fill="#fff" opacity="0.350" />
        <path d="M10 12c3-2 6-2 9 0l-2 7c-3-2-6-2-9 0z" fill="#f0602c" /><path d="M20 12c3 2 6 2 9 0l-2 7c-3 2-6 2-9 0z" fill="#94cc3c" />
        <path d="M8 20c3-2 6-2 9 0l-2 7c-3-2-6-2-9 0z" fill="#3ca0ec" /><path d="M18 20c3 2 6 2 9 0l-2 7c-3 2-6 2-9 0z" fill="#fccc30" />
      </svg>
      <svg class="ie" width="32" height="30" viewBox="0 0 32 30">
        <path d="M24 18a9 9 0 1 1 0-5M8 15h19" fill="none" stroke="#186cc0" stroke-width="5" />
        <path d="M23 11a8 8 0 0 0-14 1" fill="none" stroke="#5cb8f0" stroke-width="2" />
        <path d="M29 6C30 1 24 1 17 5C8 10 1 20 3 26C4 29 8 28 12 26" fill="none" stroke="#f0b428" stroke-width="2.600" />
      </svg>
      <span class="task explorer">
        <svg width="34" height="30" viewBox="0 0 34 30"><path d="M2 2h9l2 3h19v22H2z" fill="#ecd078" stroke="#b89838" /><path d="M5 3h5v3H5z" fill="#3c9c50" /><path d="M14 3h6v3h-6z" fill="#d04830" /><path d="M23 4h6v3h-6z" fill="#3c78c8" /><path d="M2 8h30v19H2z" fill="#f8e8a4" stroke="#d0b050" /><path d="M7 29V18h20v11h-4v-6H11v6z" fill="#8cc4ec" stroke="#4a8cc4" /></svg>
      </span>
      <span class="stack"></span>
      <span class="task chrome">
        <svg width="30" height="30" viewBox="0 0 30 30"><circle cx="15" cy="15" r="14" fill="#e8c42c" /><path d="M15 15L2.900 8A14 14 0 0 1 27.100 8z" fill="#d83c2c" /><path d="M15 1a14 14 0 0 1 12.500 8H15z" fill="#d83c2c" /><path d="M2.900 8A14 14 0 0 0 14 29l6-10l-5-4z" fill="#3c9c44" /><circle cx="15" cy="15" r="6.800" fill="#fff" /><circle cx="15" cy="15" r="5.200" fill="#3c7cd0" /></svg>
      </span>
      <span class="task notes">
        <svg width="32" height="30" viewBox="0 0 32 30"><path d="M24 3l6 21l-8 3z" fill="#4c545c" /><path d="M24 4l3 21l-7 2z" fill="#f0f0f0" /><path d="M10 2h15l-5 24L2 23z" fill="#84bccc" stroke="#6ca4b8" stroke-width="0.800" /><path d="M11 2h14l-1 4H9z" fill="#b8dce4" /></svg>
      </span>
      <span class="stack"></span>
      <span class="task calc">
        <svg width="24" height="30" viewBox="0 0 24 30"><rect x="1" y="1" width="22" height="28" rx="2" fill="#b4d4ec" stroke="#5c94c0" /><rect x="3" y="3" width="17" height="8" fill="#ecd090" stroke="#8c9ca8" /><path d="M15 5h3v4h-3z" fill="none" stroke="#446" /><path d="M3 15h18M3 19h18M3 23h18M3 27h18" stroke="#f4f8ff" stroke-width="2.500" stroke-dasharray="3 1.500" /></svg>
      </span>
      <span class="task active"><span class="app-logo large"></span></span>
      <div class="tray">
        <svg class="tray-icons" width="92" height="20" viewBox="0 0 92 20">
          <path d="M3 11l3.500-4l3.500 4z" fill="#fff" />
          <path d="M24 2v16" stroke="#fff" stroke-width="1.600" /><path d="M26 3h9v8h-9z" fill="#eef2f8" stroke="#566" stroke-width="0.600" /><circle cx="33" cy="13" r="4.500" fill="#d43c30" /><path d="M31 11l4 4M35 11l-4 4" stroke="#fff" stroke-width="1.400" />
          <path d="M52 6h10v9H52zM54 18h8" fill="#50709c" stroke="#fff" stroke-width="1.600" /><path d="M47 2v5h5V2M49.500 7v8" fill="none" stroke="#fff" stroke-width="1.400" />
          <path d="M71 7h3l5-5v16l-5-5h-3z" fill="#f4f6fa" stroke="#556" stroke-width="0.600" /><circle cx="81" cy="13" r="4.500" fill="#d43c30" /><path d="M79 11l4 4M83 11l-4 4" stroke="#fff" stroke-width="1.400" />
        </svg>
        <div class="clock"><span>2:45 PM</span><span>12/1/2014</span></div>
        <span class="show-desktop"></span>
      </div>
    </div>
  </div>
</template>

<style>
body {
  background: #1c2030;
  overflow: hidden;
}
</style>

<style scoped>
.screen {
  width: 1366px;
  height: 768px;
  display: flex;
  flex-direction: column;
  font-family: "Noto Sans", "Open Sans", sans-serif;
  font-size: 11.5px;
  color: #14141e;
  background: #1c2030;
}
.window {
  height: 725px;
  margin: 2px 2px 0 1px;
  padding: 0 7px 8px 6px;
  box-sizing: border-box;
  display: flex;
  flex-direction: column;
  border-radius: 6px 6px 0 0;
  border-top: 1px solid #e4f0fa;
  border-left: 1px solid #e8f2fa;
  border-bottom: 1px solid #1a2430;
  background: linear-gradient(#9ab8d2 0, #a8c2de 14px, #c4d4ec 30px, #bccfe6 100px, #b4d0ea 100%);
}

/* Title bar */
.titlebar {
  height: 28px;
  flex: none;
  display: flex;
  align-items: center;
  padding-top: 2px;
  box-sizing: border-box;
  background: linear-gradient(#9ab8d2, #a8c2de 50%, #c2d3ea);
}
.app-logo {
  width: 19px;
  height: 16px;
  flex: none;
  background: radial-gradient(circle at 65% 40%, #fff0d0 0, #e89050 18%, transparent 38%), linear-gradient(50deg, #000 22%, #24588c 38%, #5a88b0 48%, #201410 66%, #000 85%);
}
.app-logo.small {
  width: 14px;
  height: 14px;
  margin: 1px 5px 0 3px;
}
.app-logo.large {
  width: 28px;
  height: 27px;
}
.title {
  flex: 1;
  font-size: 12px;
  letter-spacing: -0.05px;
}
.win-buttons {
  display: flex;
  gap: 3px;
  padding-right: 2px;
}
.win-btn {
  width: 30px;
  height: 17px;
  box-sizing: border-box;
  display: flex;
  align-items: center;
  justify-content: center;
  border: 1px solid #5c7490;
  border-radius: 3px;
  box-shadow: inset 0 0 0 1px #dceaf6;
  background: linear-gradient(#c4d8ea 45%, #9ab4d0 50%, #b4cce4);
}
.win-btn.close {
  border-color: #5c2028;
  box-shadow: inset 0 0 0 1px #e8a898;
  background: linear-gradient(#dc9080 45%, #b83c28 50%, #d06848);
}
.win-btn .min {
  width: 9px;
  height: 3px;
  margin-top: 4px;
  background: #fff;
  border: 1px solid #5c6474;
}
.win-btn .max {
  width: 4px;
  height: 3px;
  border: 2.5px solid #fff;
  outline: 1px solid #5c6474;
  background: #5c6474;
}

/* Menus */
.menubar {
  height: 19px;
  flex: none;
  display: flex;
  align-items: center;
  background: #d2d0e3;
}
.menubar u {
  text-underline-offset: 2px;
}
.start,
.enovia,
.menu {
  height: 18px;
  line-height: 17px;
  box-sizing: border-box;
}
.start {
  width: 48px;
  margin-left: 2px;
  padding-left: 7px;
  letter-spacing: -0.2px;
  background: #fbe3b4;
}
.enovia {
  width: 100px;
  margin-left: 7px;
  white-space: nowrap;
  letter-spacing: 0.05px;
}
.menu {
  letter-spacing: -0.1px;
}
.doc-buttons {
  margin-left: auto;
  margin-right: 1px;
  display: flex;
  gap: 1px;
}
.doc-buttons span {
  width: 18px;
  height: 17px;
  display: flex;
  align-items: center;
  justify-content: center;
  border: 1px solid #a8b8cc;
  box-sizing: border-box;
  background: #eaf1f9;
}
.doc-min {
  width: 6px;
  height: 2px;
  margin-top: 6px;
  background: #667487;
}

/* Toolbars */
.toolbar {
  flex: none;
  display: flex;
  align-items: flex-start;
  box-sizing: border-box;
  background: linear-gradient(#fff 0, #fff 3px, #e6e5f0 7px, #d4d2e6 14px, #d0cfe3 22px, #b8b8c8 30px, #a6a6b2 35px);
  border-bottom: 1px solid #6c6c7c;
}
.toolbar.top {
  height: 37px;
  padding-left: 197px;
}
.toolbar.bottom {
  height: 37px;
  padding-left: 6px;
}
.group {
  flex: none;
  display: flex;
  height: 37px;
  padding-left: 7px;
  box-sizing: border-box;
  background: linear-gradient(90deg, #fff 1px, #9c9cac 1px, #9c9cac 2px, transparent 2px) 0 4px / 2px 15px no-repeat;
}
.tool {
  flex: none;
  position: relative;
  padding: 8px 0 0 5px;
  box-sizing: border-box;
}
.bottom .tool {
  padding-top: 9px;
}
.tool svg,
.vtool svg {
  display: block;
  overflow: visible;
}
.tool text {
  font-family: "Liberation Sans", sans-serif;
}
.tool .slant {
  font-family: "Liberation Serif", serif;
  font-style: italic;
  font-weight: bold;
}
.tool .heavy {
  font-weight: bold;
}
.more {
  position: absolute;
  left: 23px;
  top: 29px;
  border: 3.5px solid transparent;
  border-top: 4px solid #0c0c14;
  border-bottom: 0;
}
.more.lit {
  background: #fff;
}
.overflow {
  margin: 2px 8px 0 3px;
  font-size: 13px;
  line-height: 14px;
  color: #fff;
  text-shadow: -1px 0 #a4a4b4;
}
.brand {
  margin-top: 1px;
}
.brand text {
  font: italic bold 10.5px "Liberation Sans", sans-serif;
  fill: #2c2478;
}

/* Work area */
.middle {
  flex: none;
  height: 571px;
  display: flex;
}
.viewport {
  position: relative;
  width: 1312px;
  height: 570px;
  overflow: hidden;
  border-top: 1px solid #282850;
  box-sizing: border-box;
  background: linear-gradient(#383468 0, #3c3a6a 35%, #434374 62%, #474778 67%, #6e6e94 82%, #a8a8bc 100%);
}
.scene {
  position: absolute;
  left: 0;
  top: -1px;
}
.axis-name {
  font-family: "Noto Sans", sans-serif;
  font-size: 11px;
}
.axis-name.big {
  font-size: 13px;
}
.watermark {
  fill: #d8dde6;
  filter: drop-shadow(1.5px 1.5px 0 rgba(70, 72, 92, 0.85));
}
.cjk {
  font-family: "Noto Sans CJK SC", sans-serif;
  font-weight: 300;
  font-size: 55px;
  stroke: #d8dde6;
  stroke-width: 0.4px;
}
.latin {
  font-family: "Liberation Serif", serif;
  font-size: 56px;
  text-anchor: middle;
  stroke: #d8dde6;
  stroke-width: 0.6px;
}

/* Specification tree */
.tree {
  position: relative;
  width: 200px;
  padding: 2px 0 0 5px;
  color: #fff;
  font-size: 13px;
  background: linear-gradient(#fff, #fff) 13px 28px / 2px 212px no-repeat;
}
.root {
  display: flex;
  height: 31px;
}
.selected {
  align-self: flex-start;
  margin: 6px 0 0 3px;
  padding-right: 1px;
  height: 20px;
  line-height: 20px;
  border-top: 1px solid #fff;
  border-left: 1px solid #fff;
  background: #1464cc;
  box-sizing: border-box;
}
.node {
  display: flex;
  height: 32.1px;
}
.node > span {
  margin: 8.6px 0 0 5px;
  line-height: 20px;
  letter-spacing: 0.1px;
}
.node > .tight {
  letter-spacing: -0.05px;
}
.node > svg {
  margin-left: 2px;
}
.node > svg.constraints {
  margin: 4px 0 0 0;
}
.node.last > span {
  margin: 8px 0 0;
}
.knob {
  position: relative;
  width: 18px;
  height: 13px;
  margin: 9px 10px 0 0;
  flex: none;
  border-radius: 50%;
  background: linear-gradient(#000, #000) 50% 50% / 12px 3px no-repeat, linear-gradient(#000, #000) 50% 50% / 3px 10px no-repeat, #9c9ca4;
}
.knob::after {
  content: "";
  position: absolute;
  left: 18px;
  top: 6px;
  width: 9px;
  height: 2px;
  background: #fff;
}

/* Side toolbar */
.sidebar {
  width: 37px;
  padding-top: 5px;
  box-sizing: border-box;
  background: linear-gradient(90deg, #fff 0, #fff 4px, #dddcea 9px, #d2d0e6 20px, #cfcee2 28px, #b0b0be 34px, #b8b8cc);
}
.vgroup {
  padding: 9px 0 0 9px;
  box-sizing: border-box;
  background: linear-gradient(#fff 1px, #a8a8b8 1px, #a8a8b8 2px, transparent 2px) 4px 0 / 16px 2px no-repeat;
}
.vtool {
  display: block;
  position: relative;
  padding-top: 4px;
  box-sizing: border-box;
}
.vtool .more {
  left: 20px;
  top: 24px;
}

/* Status bar */
.status {
  flex: none;
  height: 24px;
  display: flex;
  align-items: center;
  padding-right: 1px;
  background: #d1cfe3;
}
.message {
  flex: 1;
  padding-left: 3px;
  line-height: 22px;
  letter-spacing: -0.06px;
}
.power-input {
  width: 299px;
  height: 18px;
  box-sizing: border-box;
  border: 1px solid #f4f4fa;
  border-top: 2px solid #6c6c78;
  border-left: 2px solid #6c6c78;
  background: #fff;
}
.status-btn {
  width: 32px;
  height: 20px;
  margin-left: 2px;
  box-sizing: border-box;
  display: flex;
  align-items: center;
  justify-content: center;
  border: 1px solid #e8e8f0;
  border-right-color: #85858f;
  border-bottom-color: #85858f;
  background: #c6c5d0;
}

/* Taskbar */
.taskbar {
  height: 40px;
  margin-top: 1px;
  display: flex;
  align-items: flex-start;
  border-top: 1px solid #d4e4f2;
  box-sizing: border-box;
  background: linear-gradient(90deg, #8494b0 0, #8e9eb8 100px, #a2b6d0 180px, #a7c0db 440px, #a7c0db 1150px, #8292ac 1185px);
}
.orb {
  margin: 1px 0 0 8px;
}
.ie {
  margin: 4px 15px 0 28px;
}
.task {
  width: 60px;
  height: 39px;
  box-sizing: border-box;
  display: flex;
  align-items: center;
  justify-content: center;
  border: 1px solid #54677e;
  border-radius: 3px;
  box-shadow: inset 0 0 0 1px rgba(255, 255, 255, 0.7);
  background: linear-gradient(135deg, #c8d8e8, #a9c0d8);
}
.task.explorer {
  width: 53px;
  background: linear-gradient(135deg, #e4ecf4, #c8d8e4);
}
.task.chrome {
  margin-left: 2px;
  background: linear-gradient(90deg, #38c848 4px, #a8e0b8 7px, #c4d6e8 16px, #b0c6de);
}
.task.notes {
  width: 55px;
  margin-left: 2px;
}
.task.active {
  margin-left: 2px;
  background: linear-gradient(135deg, #f4f8fc, #d4e2ee);
}
.stack {
  width: 7px;
  height: 39px;
  box-sizing: border-box;
  border-right: 1px solid #54677e;
  border-radius: 0 3px 3px 0;
  background: linear-gradient(90deg, #b8cadc 3px, #54677e 3px, #54677e 4px, #b8cadc 4px);
}
.tray {
  margin-left: auto;
  display: flex;
}
.tray-icons {
  margin: 11px 3px 0 0;
}
.clock {
  width: 66px;
  display: flex;
  flex-direction: column;
  align-items: center;
  padding-top: 4px;
  color: #fff;
  line-height: 17px;
  letter-spacing: -0.2px;
  text-shadow: 0 0 2px #445;
}
.show-desktop {
  width: 14px;
  height: 39px;
  box-sizing: border-box;
  margin-left: 4px;
  border: 1px solid #3c4c60;
  background: linear-gradient(135deg, #c4d0dc, #5c6c84 60%);
}
</style>
